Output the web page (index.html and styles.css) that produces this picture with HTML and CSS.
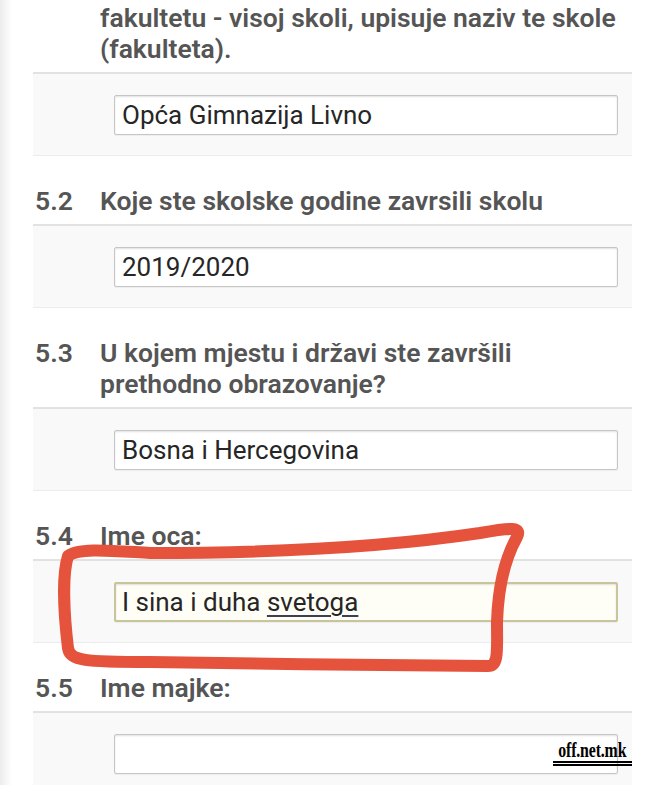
FILE: index.html
```html
<!DOCTYPE html>
<html lang="bs">
<head>
<meta charset="utf-8">
<title>Obrazac</title>
<link rel="stylesheet" href="styles.css">
</head>
<body>
<div class="page">
  <div class="intro">fakultetu - visoj skoli, upisuje naziv te skole<br>(fakulteta).</div>
  <div class="answer"><div class="field">Opća Gimnazija Livno</div></div>

  <div class="question"><span class="num">5.2</span><span class="text">Koje ste skolske godine zavrsili skolu</span></div>
  <div class="answer"><div class="field">2019/2020</div></div>

  <div class="question"><span class="num">5.3</span><span class="text">U kojem mjestu i državi ste završili<br>prethodno obrazovanje?</span></div>
  <div class="answer"><div class="field">Bosna i Hercegovina</div></div>

  <div class="question"><span class="num">5.4</span><span class="text">Ime oca:</span></div>
  <div class="answer"><div class="field field-active">I sina i duha <span class="spell">svetoga</span></div></div>

  <div class="question"><span class="num">5.5</span><span class="text">Ime majke:</span></div>
  <div class="answer answer-last"><div class="field"></div></div>

  <svg class="scribble" width="665" height="785" viewBox="0 0 665 785" aria-hidden="true">
    <path d="M150 553 C115 551 78 547 68 556 C62 575 64 615 68 648 C70 661 85 662 150 662 C260 664 380 665 488 666 C499 666 497 650 497 622 C498 592 503 562 517 537 C522 527 512 527 480 533 C420 542 320 553 150 553 Z" fill="none" stroke="#e5533d" stroke-width="12" stroke-linejoin="round" stroke-linecap="round"/>
  </svg>

  <div class="watermark"><span class="wm-text">off.net.mk</span></div>
</div>
</body>
</html>
```

FILE: styles.css
```css
html, body {
  margin: 0;
  padding: 0;
}

body {
  background: #ffffff;
  font-family: Roboto, "Liberation Sans", Arial, sans-serif;
}

.page {
  position: relative;
  width: 665px;
  height: 785px;
  overflow: hidden;
  background: linear-gradient(to right, #ececec 0px, #ffffff 12px);
}

.intro {
  margin: 2px 0 0 100px;
  font-size: 26.5px;
  line-height: 31px;
  font-weight: 600;
  color: #555555;
}

.question {
  display: flex;
  margin: 29px 0 8px 35px;
  font-size: 26.5px;
  line-height: 31px;
  font-weight: 600;
  color: #555555;
}

.question .num {
  width: 65px;
  flex: none;
}

.answer {
  margin: 8px 33px 0 33px;
  padding: 21px 14px 20px 81px;
  background: #f9f9f9;
  border-top: 2px solid #e2e2e2;
  border-bottom: 1px solid #ececec;
}

.question + .answer {
  margin-top: 0;
}

.answer-last {
  border-bottom: none;
  padding-bottom: 40px;
}

.field {
  height: 40px;
  box-sizing: border-box;
  padding: 0 7px;
  background: #ffffff;
  border: 1px solid #c6c6c6;
  border-radius: 2px;
  box-shadow: inset 0 1px 2px rgba(0, 0, 0, 0.12), 0 1px 1px rgba(0, 0, 0, 0.05);
  font-size: 26px;
  line-height: 38px;
  color: #262626;
}

.field-active {
  background: #fffef6;
  border: 2px solid #c9c59a;
  line-height: 36px;
  padding-left: 6px;
}

.spell {
  text-decoration: underline;
  text-decoration-color: #3a3f55;
  text-decoration-thickness: 2px;
  text-underline-offset: 4px;
}

.scribble {
  position: absolute;
  left: 0;
  top: 0;
  pointer-events: none;
}

.watermark {
  position: absolute;
  left: 553px;
  top: 739px;
  width: 79px;
  height: 22px;
  border-bottom: 5px double #000000;
  display: flex;
  justify-content: center;
}

.wm-text {
  display: block;
  flex: none;
  font-family: "Liberation Serif", "Times New Roman", serif;
  font-weight: 700;
  font-size: 22px;
  line-height: 22px;
  color: #000000;
  transform: scaleX(0.72);
  transform-origin: center;
  letter-spacing: -0.2px;
}
```
